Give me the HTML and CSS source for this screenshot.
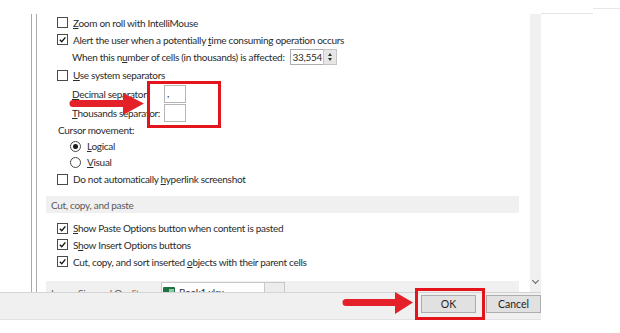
FILE: index.html
```html
<html lang="en">
<head>
    <meta charset="UTF-8">
    <title>Excel Options - Advanced</title>
    <link rel="stylesheet" href="styles.css">
</head>
<body>

    <!-- faint edge of the window behind -->
    <div class="top-edge">
        <div class="edge-gap"></div>
        <div class="edge-a"></div>
        <div class="edge-b"></div>
    </div>

    <div class="dialog">
        <div class="main">
            <div class="nav"></div>
            <div class="options">
                <div class="pane">
                    <div class="row h17"><span class="cb"></span><span class="lbl"><u>Z</u>oom on roll with IntelliMouse</span></div>
                    <div class="row h17"><span class="cb checked"><svg viewBox="0 0 10 10"><path d="M2 5.2 L4.2 7.4 L8.2 2.6" /></svg></span><span class="lbl">Alert the user when a potentially <u>t</u>ime consuming operation occurs</span></div>
                    <div class="row h18 indent">
                        <span class="lbl">When this n<u>u</u>mber of cells (in thousands) is affected:</span>
                        <span class="spin"><span class="spin-val">33,554</span><span class="spin-btns"><i class="up"></i><i class="down"></i></span></span>
                    </div>
                    <div class="row h18"><span class="cb"></span><span class="lbl"><u>U</u>se system separators</span></div>
                    <div class="row h19 indent"><span class="lbl sep-lbl"><u>D</u>ecimal separator:</span><span class="sep-box">,</span></div>
                    <div class="row h19 indent"><span class="lbl sep-lbl"><u>T</u>housands separator:</span><span class="sep-box"></span></div>
                    <div class="row h16 sub">Cursor movement:</div>
                    <div class="row h16 radio-row"><span class="radio on"></span><span class="lbl"><u>L</u>ogical</span></div>
                    <div class="row h16 radio-row"><span class="radio"></span><span class="lbl"><u>V</u>isual</span></div>
                    <div class="row h18"><span class="cb"></span><span class="lbl">Do not automatically <u>h</u>yperlink screenshot</span></div>

                    <div class="band">Cut, copy, and paste</div>

                    <div class="row h16"><span class="cb checked"><svg viewBox="0 0 10 10"><path d="M2 5.2 L4.2 7.4 L8.2 2.6" /></svg></span><span class="lbl"><u>S</u>how Paste Options button when content is pasted</span></div>
                    <div class="row h17"><span class="cb checked"><svg viewBox="0 0 10 10"><path d="M2 5.2 L4.2 7.4 L8.2 2.6" /></svg></span><span class="lbl">S<u>h</u>ow Insert Options buttons</span></div>
                    <div class="row h17"><span class="cb checked"><svg viewBox="0 0 10 10"><path d="M2 5.2 L4.2 7.4 L8.2 2.6" /></svg></span><span class="lbl">Cut, copy, and sort inserted <u>o</u>bjects with their parent cells</span></div>

                    <div class="band band-2">
                        <span class="band-title">Image Size and Quality</span>
                        <span class="book">
                            <svg class="xl" viewBox="0 0 12 10"><rect x="0" y="0" width="12" height="10" rx="1" fill="#1e7145"/><rect x="6" y="2" width="5" height="6" fill="#8cc8a0"/></svg>
                            <span class="book-name">Book1.xlsx</span>
                            <span class="book-btn"></span>
                        </span>
                    </div>
                </div>
                <div class="scrollbar"><span class="chev"></span></div>
            </div>
        </div>
        <div class="footer">
            <button class="btn">OK</button>
            <button class="btn">Cancel</button>
        </div>
    </div>

    <!-- annotations drawn over the screenshot -->
    <svg class="arrow arrow-1" width="78" height="24" viewBox="0 0 78 24">
        <path d="M5 8 H56 V15 H5 A3.5 3.5 0 0 1 5 8 Z" />
        <polygon points="55,1 76,11.5 55,23" />
    </svg>
    <div class="mark mark-1"></div>

    <svg class="arrow arrow-2" width="74" height="24" viewBox="0 0 74 24">
        <path d="M5 8 H55 V15 H5 A3.5 3.5 0 0 1 5 8 Z" />
        <polygon points="54,1 72,11.5 54,23" />
    </svg>
    <div class="mark mark-2"></div>

</body>
</html>
```

FILE: styles.css
```css
body {
    margin: 0;
    width: 620px;
    height: 333px;
    overflow: hidden;
    background: #fff;
    font-family: Lato, "Noto Sans", sans-serif;
    font-size: 10px;
    letter-spacing: -0.3px;
    color: #2b2b2b;
}

u {
    text-decoration-thickness: 1px;
    text-underline-offset: 1px;
}

/* faint lines on the top right */
.top-edge {
    display: flex;
    align-items: flex-start;
    height: 14px;
}

.edge-gap {
    width: 541px;
}

.edge-a {
    width: 52px;
    height: 13px;
    border-bottom: 1px solid #e4e4e4;
}

.edge-b {
    width: 27px;
    height: 8px;
    border-bottom: 1px solid #e8e8e8;
}

.dialog {
    width: 541px;
    display: flex;
    flex-direction: column;
}

.main {
    display: flex;
    height: 278px;
    overflow: hidden;
}

.nav {
    width: 31px;
    border-right: 1px solid #a9a9a9;
}

.options {
    flex: 1;
    display: flex;
    margin-left: 4px;
    border-left: 1px solid #a9a9a9;
}

.pane {
    flex: 1;
    display: flex;
    flex-direction: column;
}

.row {
    display: flex;
    align-items: center;
    flex-shrink: 0;
    padding-left: 20px;
    white-space: nowrap;
}

.h16 { height: 16px; }
.h17 { height: 17px; }
.h18 { height: 18px; }
.h19 { height: 19px; }

.indent {
    padding-left: 35px;
}

.sub {
    padding-left: 21px;
}

.radio-row {
    padding-left: 33px;
}

.lbl {
    margin-left: 5px;
}

.indent .lbl {
    margin-left: 0;
}

.radio-row .lbl {
    margin-left: 6px;
}

.cb {
    width: 9px;
    height: 9px;
    border: 1px solid #4a4a4a;
    background: #fff;
    display: flex;
}

.cb svg {
    width: 9px;
    height: 9px;
    fill: none;
    stroke: #1a1a1a;
    stroke-width: 1.6;
}

.radio {
    width: 9px;
    height: 9px;
    border: 1px solid #4a4a4a;
    border-radius: 50%;
    display: flex;
    align-items: center;
    justify-content: center;
}

.radio.on:after {
    content: "";
    width: 5px;
    height: 5px;
    border-radius: 50%;
    background: #1a1a1a;
}

/* spin box */
.spin {
    display: flex;
    height: 16px;
    margin-left: 5px;
}

.spin-val {
    width: 30px;
    padding-left: 2px;
    border: 1px solid #abadb3;
    border-right: none;
    line-height: 14px;
}

.spin-btns {
    width: 12px;
    border: 1px solid #c4c4c4;
    background: #e6e6e6;
    display: flex;
    flex-direction: column;
    align-items: center;
    justify-content: center;
    gap: 2px;
}

.spin-btns i {
    width: 0;
    height: 0;
    border-left: 2.5px solid transparent;
    border-right: 2.5px solid transparent;
}

.spin-btns .up {
    border-bottom: 3px solid #333;
}

.spin-btns .down {
    border-top: 3px solid #333;
}

.sep-lbl {
    width: 92px;
}

.sep-box {
    box-sizing: border-box;
    width: 22px;
    height: 18px;
    padding-left: 2px;
    border: 1px solid #b5b5b5;
    line-height: 14px;
}

/* section headers */
.band {
    margin: 8px 11px 7px 9px;
    height: 17px;
    padding-left: 5px;
    background: #f0f0f0;
    color: #595959;
    display: flex;
    align-items: center;
    flex-shrink: 0;
}

.band-2 {
    margin-top: 11px;
    height: 24px;
    align-items: flex-start;
    padding-top: 6px;
}

.band-title {
    width: 110px;
}

.book {
    display: flex;
    align-items: center;
    margin-top: -5px;
    width: 124px;
    height: 20px;
    border: 1px solid #c8c8c8;
    box-sizing: border-box;
    background: #fff;
    color: #2b2b2b;
}

.xl {
    width: 12px;
    height: 10px;
    margin-left: 1px;
}

.book-name {
    margin-left: 4px;
    flex: 1;
}

.book-btn {
    width: 19px;
    height: 18px;
    border-left: 1px solid #c8c8c8;
    background: #ececec;
}

.scrollbar {
    width: 11px;
    background: #f0f0f0;
    display: flex;
    align-items: flex-end;
    justify-content: center;
    padding-bottom: 9px;
    box-sizing: border-box;
}

.chev {
    width: 4px;
    height: 4px;
    border-right: 1px solid #606060;
    border-bottom: 1px solid #606060;
    transform: rotate(45deg);
}

/* footer */
.footer {
    box-sizing: border-box;
    height: 28px;
    padding-top: 2px;
    border-top: 1px solid #d4d4d4;
    border-bottom: 1px solid #e2e2e2;
    background: #f0f0f0;
    display: flex;
    justify-content: flex-end;
    align-items: flex-start;
    gap: 10px;
}

.btn {
    width: 55px;
    height: 18px;
    padding: 0;
    border: 1px solid #adadad;
    background: #e1e1e1;
    font-family: Lato, "Noto Sans", sans-serif;
    font-size: 10.5px;
    color: #222;
}

/* red call-outs */
.arrow {
    position: absolute;
    fill: #e42128;
}

.arrow-1 {
    left: 68px;
    top: 92px;
}

.arrow-2 {
    left: 341px;
    top: 291px;
}

.mark {
    position: absolute;
    border: 3px solid #e3141b;
    box-sizing: border-box;
}

.mark-1 {
    left: 147px;
    top: 81px;
    width: 74px;
    height: 47px;
}

.mark-2 {
    left: 415px;
    top: 288px;
    width: 70px;
    height: 32px;
}
```
